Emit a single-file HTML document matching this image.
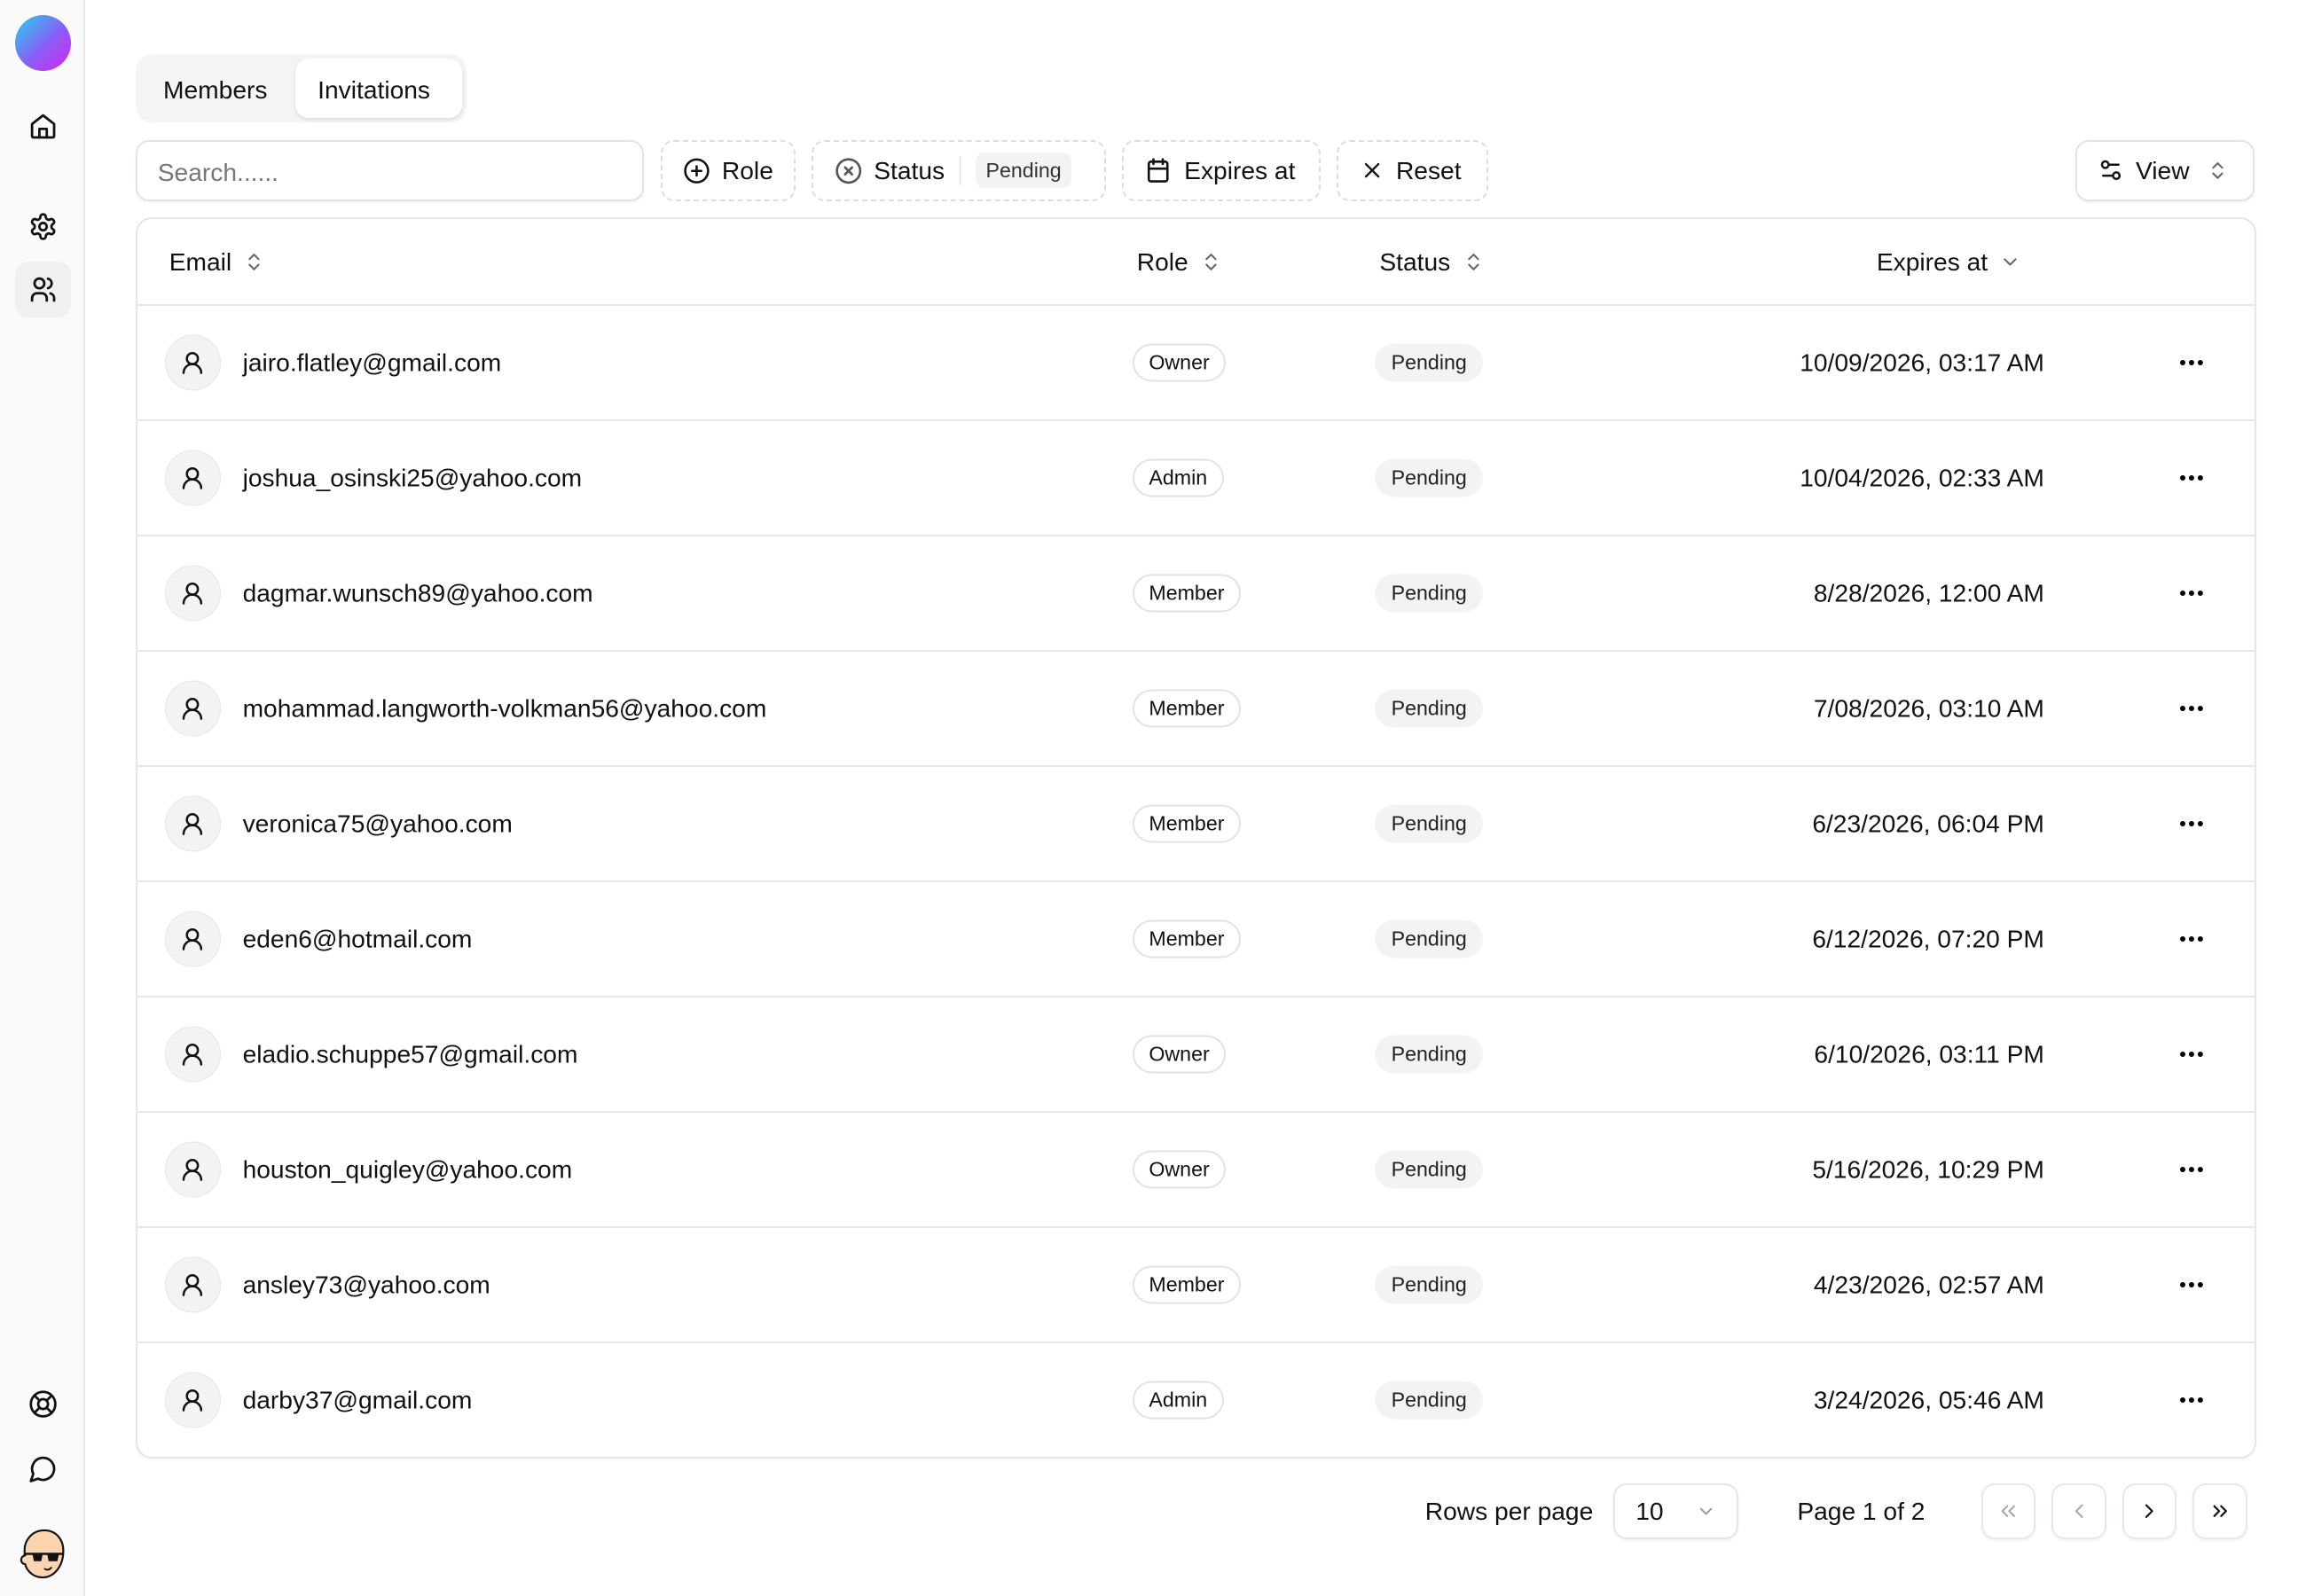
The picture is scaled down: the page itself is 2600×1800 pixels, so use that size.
<!DOCTYPE html>
<html><head><meta charset="utf-8"><style>
*{box-sizing:border-box;margin:0;padding:0}
html,body{width:2600px;height:1800px;overflow:hidden;background:#fff}
#r{zoom:1.6582;width:1568px;height:1086px;position:relative;font-family:"Liberation Sans",sans-serif;color:#111;font-size:17px}
.a{position:absolute}
svg{display:block}
.ic{fill:none;stroke:#111;stroke-width:2;stroke-linecap:round;stroke-linejoin:round}
.btn{position:absolute;top:95px;height:42px;border:1.5px dashed #ddd;border-radius:9px;display:flex;align-items:center;padding:0 14px;gap:8px;font-size:17px}
.row{position:absolute;left:93px;width:1440px;height:78.4px;border-top:1.5px solid #e6e6e6}
.row>*{position:absolute;top:50%;transform:translateY(-50%)}
.av{left:19px;width:38px;height:38px;border-radius:50%;background:#f3f3f3;border:1px solid #e6e6e6;display:flex;align-items:center;justify-content:center}
.em{left:72px}
.role{left:677px;height:26px;border:1.5px solid #e3e3e3;border-radius:13px;padding:0 10px;font-size:14px;line-height:23px}
.st{left:842px;height:26px;background:#f3f3f3;border-radius:13px;padding:0 11px;font-size:14px;line-height:26px;color:#222}
.dt{right:143px}
.dots{left:1388px}
.pb{position:absolute;top:1009px;width:37px;height:38px;border:1.5px solid #e8e8e8;border-radius:9px;display:flex;align-items:center;justify-content:center;box-shadow:0 1px 2px rgba(0,0,0,.05)}
</style></head><body><div id="r">
<div class="a" style="left:0;top:0;width:58px;height:1086px;background:#fafafa;border-right:1.5px solid #e8e8e8"></div>
<div class="a" style="left:10px;top:10px;width:38px;height:38px;border-radius:50%;background:linear-gradient(135deg,#22d3ee,#8b5cf6 55%,#d926f0)"></div>
<svg class="a ic" style="left:19px;top:76px" width="20" height="20" viewBox="0 0 24 24"><path d="M3 10l9-7 9 7v10a1 1 0 0 1-1 1H4a1 1 0 0 1-1-1z"/><path d="M9 21v-7h6v7"/></svg>
<svg class="a ic" style="left:19px;top:144px" width="20" height="20" viewBox="0 0 24 24"><path d="M12.22 2h-.44a2 2 0 0 0-2 2v.18a2 2 0 0 1-1 1.73l-.43.25a2 2 0 0 1-2 0l-.15-.08a2 2 0 0 0-2.730.73l-.22.38a2 2 0 0 0 .73 2.730l.15.1a2 2 0 0 1 1 1.72v.51a2 2 0 0 1-1 1.74l-.15.09a2 2 0 0 0-.73 2.73l.22.38a2 2 0 0 0 2.73.73l.15-.08a2 2 0 0 1 2 0l.43.25a2 2 0 0 1 1 1.73V20a2 2 0 0 0 2 2h.44a2 2 0 0 0 2-2v-.18a2 2 0 0 1 1-1.73l.43-.25a2 2 0 0 1 2 0l.15.08a2 2 0 0 0 2.73-.73l.22-.39a2 2 0 0 0-.73-2.73l-.15-.08a2 2 0 0 1-1-1.74v-.5a2 2 0 0 1 1-1.74l.15-.09a2 2 0 0 0 .73-2.73l-.22-.38a2 2 0 0 0-2.73-.73l-.15.08a2 2 0 0 1-2 0l-.43-.25a2 2 0 0 1-1-1.73V4a2 2 0 0 0-2-2z"/><circle cx="12" cy="12" r="3"/></svg>
<div class="a" style="left:10px;top:178px;width:38px;height:38px;border-radius:9px;background:#f0f0f0"></div>
<svg class="a ic" style="left:19px;top:187px" width="20" height="20" viewBox="0 0 24 24"><circle cx="9" cy="7" r="4"/><path d="M3 21v-2a4 4 0 0 1 4-4h4a4 4 0 0 1 4 4v2"/><path d="M16 3.13a4 4 0 0 1 0 7.75M21 21v-2a4 4 0 0 0-3-3.85"/></svg>
<svg class="a ic" style="left:19px;top:945px" width="20" height="20" viewBox="0 0 24 24"><circle cx="12" cy="12" r="10"/><circle cx="12" cy="12" r="4"/><path d="M4.93 4.93l4.24 4.24M14.83 9.17l4.24-4.24M14.83 14.83l4.24 4.24M9.17 14.83l-4.24 4.24"/></svg>
<svg class="a ic" style="left:19px;top:989px" width="20" height="20" viewBox="0 0 24 24"><path d="M7.9 20A9 9 0 1 0 4 16.1L2 22z"/></svg>
<svg class="a" style="left:12px;top:1038px" width="34" height="38" viewBox="0 0 34 38"><path d="M5 20C3 10 10 3 18 3c8 0 13 6 13 14 0 10-6 18-14 18C10 35 6 30 5 26c-3 0-4-5 0-6z" fill="#fcd5b0" stroke="#111" stroke-width="1.3"/><path d="M4 19h27" stroke="#111" stroke-width="1.5"/><path d="M10 19h7l-1 5h-5zM20 19h8l-1 5h-6z" fill="#111"/><path d="M18 29q3 2 5-1" fill="none" stroke="#111" stroke-width="1.2"/></svg>

<div class="a" style="left:92px;top:37px;width:225px;height:46px;background:#f4f4f4;border-radius:11px"></div>
<div class="a" style="left:111px;top:51px">Members</div>
<div class="a" style="left:201px;top:40px;width:113px;height:40px;background:#fff;border-radius:9px;box-shadow:0 1px 3px rgba(0,0,0,.1)"></div>
<div class="a" style="left:216px;top:51px">Invitations</div>

<div class="a" style="left:92px;top:95px;width:346px;height:42px;border:1.5px solid #e3e3e3;border-radius:9px;box-shadow:0 1px 2px rgba(0,0,0,.05);padding:11px 14px;color:#777">Search......</div>
<div class="btn" style="left:449px;width:92px"><svg class="ic" width="19" height="19" viewBox="0 0 24 24"><circle cx="12" cy="12" r="10"/><path d="M8 12h8M12 8v8"/></svg>Role</div>
<div class="btn" style="left:552px;width:200px"><svg class="ic" style="stroke:#555" width="19" height="19" viewBox="0 0 24 24"><circle cx="12" cy="12" r="10"/><path d="M15 9l-6 6M9 9l6 6"/></svg>Status<span style="width:1px;height:20px;background:#ddd;margin:0 2px"></span><span style="background:#f3f3f3;border-radius:6px;padding:4px 7px;font-size:14px;color:#333">Pending</span></div>
<div class="btn" style="left:763px;width:135px"><svg class="ic" width="19" height="19" viewBox="0 0 24 24"><rect x="4" y="4" width="16" height="17" rx="2"/><path d="M8 2v4M16 2v4M4 10h16"/></svg>Expires at</div>
<div class="btn" style="left:909px;width:103px"><svg class="ic" width="17" height="17" viewBox="0 0 24 24"><path d="M18 6L6 18M6 6l12 12"/></svg>Reset</div>
<div class="btn" style="left:1411px;width:122px;border-style:solid;border-color:#e3e3e3;box-shadow:0 1px 2px rgba(0,0,0,.05)"><svg class="ic" width="18" height="18" viewBox="0 0 24 24"><path d="M14 17H5M19 7h-9"/><circle cx="17" cy="17" r="3"/><circle cx="7" cy="7" r="3"/></svg>View<svg class="ic" style="stroke:#666;margin-left:4px" width="15" height="15" viewBox="0 0 24 24"><path d="M7 9l5-5 5 5M7 15l5 5 5-5"/></svg></div>

<div class="a" style="left:92px;top:148px;width:1442px;height:844px;border:1.5px solid #e6e6e6;border-radius:11px;box-shadow:0 1px 2px rgba(0,0,0,.04)"></div>
<div class="a" style="left:115px;top:168px;display:flex;align-items:center;gap:8px">Email<svg class="ic" style="stroke:#666" width="15" height="15" viewBox="0 0 24 24"><path d="M7 9l5-5 5 5M7 15l5 5 5-5"/></svg></div>
<div class="a" style="left:773px;top:168px;display:flex;align-items:center;gap:8px">Role<svg class="ic" style="stroke:#666" width="15" height="15" viewBox="0 0 24 24"><path d="M7 9l5-5 5 5M7 15l5 5 5-5"/></svg></div>
<div class="a" style="left:938px;top:168px;display:flex;align-items:center;gap:8px">Status<svg class="ic" style="stroke:#666" width="15" height="15" viewBox="0 0 24 24"><path d="M7 9l5-5 5 5M7 15l5 5 5-5"/></svg></div>
<div class="a" style="left:1276px;top:168px;display:flex;align-items:center;gap:8px">Expires at<svg class="ic" style="stroke:#666" width="15" height="15" viewBox="0 0 24 24"><path d="M6 9l6 6 6-6"/></svg></div>

<div id="rows"></div>
<script>
var d=[["jairo.flatley@gmail.com","Owner","10/09/2026, 03:17 AM"],["joshua_osinski25@yahoo.com","Admin","10/04/2026, 02:33 AM"],["dagmar.wunsch89@yahoo.com","Member","8/28/2026, 12:00 AM"],["mohammad.langworth-volkman56@yahoo.com","Member","7/08/2026, 03:10 AM"],["veronica75@yahoo.com","Member","6/23/2026, 06:04 PM"],["eden6@hotmail.com","Member","6/12/2026, 07:20 PM"],["eladio.schuppe57@gmail.com","Owner","6/10/2026, 03:11 PM"],["houston_quigley@yahoo.com","Owner","5/16/2026, 10:29 PM"],["ansley73@yahoo.com","Member","4/23/2026, 02:57 AM"],["darby37@gmail.com","Admin","3/24/2026, 05:46 AM"]];
var h="";d.forEach(function(r,i){h+='<div class="row" style="top:'+(207+i*78.4)+'px"><div class="av"><svg class="ic" width="18" height="18" viewBox="0 0 24 24"><circle cx="12" cy="8" r="5"/><path d="M20 21a8 8 0 0 0-16 0"/></svg></div><div class="em">'+r[0]+'</div><div class="role">'+r[1]+'</div><div class="st">Pending</div><div class="dt">'+r[2]+'</div><svg class="dots" width="18" height="6" viewBox="0 0 18 6"><circle cx="3" cy="3" r="1.8"/><circle cx="9" cy="3" r="1.8"/><circle cx="15" cy="3" r="1.8"/></svg></div>'});
document.getElementById("rows").innerHTML=h;
</script>

<div class="a" style="left:969px;top:1018px">Rows per page</div>
<div class="a" style="left:1097px;top:1009px;width:85px;height:38px;border:1.5px solid #e6e6e6;border-radius:9px;box-shadow:0 1px 2px rgba(0,0,0,.05);padding:9px 14px;display:flex;justify-content:space-between;align-items:center">10<svg class="ic" style="stroke:#999" width="14" height="14" viewBox="0 0 24 24"><path d="M6 9l6 6 6-6"/></svg></div>
<div class="a" style="left:1222px;top:1018px">Page 1 of 2</div>
<div class="pb" style="left:1347px"><svg class="ic" style="stroke:#aaa" width="16" height="16" viewBox="0 0 24 24"><path d="M11 17l-5-5 5-5M18 17l-5-5 5-5"/></svg></div>
<div class="pb" style="left:1395px"><svg class="ic" style="stroke:#aaa" width="16" height="16" viewBox="0 0 24 24"><path d="M15 18l-6-6 6-6"/></svg></div>
<div class="pb" style="left:1443px"><svg class="ic" width="16" height="16" viewBox="0 0 24 24"><path d="M9 18l6-6-6-6"/></svg></div>
<div class="pb" style="left:1491px"><svg class="ic" width="16" height="16" viewBox="0 0 24 24"><path d="M6 17l5-5-5-5M13 17l5-5-5-5"/></svg></div>
</div></body></html>
